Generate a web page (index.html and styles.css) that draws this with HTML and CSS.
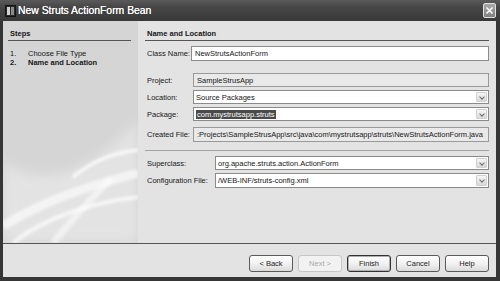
FILE: index.html
```html
<!DOCTYPE html>
<html lang="en">

<head>
  <meta charset="UTF-8" />
  <title>New Struts ActionForm Bean</title>
  <link rel="stylesheet" href="styles.css">
</head>

<body>
  <div class="window">
    <div class="titlebar">
      <svg class="app-icon" width="11" height="12" viewBox="0 0 11 12">
        <rect x="0.5" y="0.5" width="10" height="11" fill="#2a2a2a" stroke="#111" />
        <rect x="2" y="2" width="3" height="8" fill="#cfcfcf" />
        <rect x="6" y="2" width="3" height="8" fill="#8a8a8a" />
      </svg>
      <span class="title">New Struts ActionForm Bean</span>
      <span class="close">
        <svg width="9" height="9" viewBox="0 0 9 9">
          <path d="M1.5 1.5 L7.5 7.5 M7.5 1.5 L1.5 7.5" stroke="#fff" stroke-width="1.6" />
        </svg>
      </span>
    </div>

    <div class="body">
      <div class="main">
        <div class="steps">
          <svg class="swoosh" width="135" height="222" viewBox="0 0 135 222">
            <defs>
              <filter id="soft"><feGaussianBlur stdDeviation="1.5" /></filter>
              <filter id="softer"><feGaussianBlur stdDeviation="6" /></filter>
            </defs>
            <path d="M0 140 C 40 170, 90 150, 135 100 L135 222 L0 222 Z" fill="#fff" opacity="0.35" filter="url(#softer)" />
            <path d="M0 205 C 40 180, 85 165, 135 152" stroke="#fff" stroke-width="9" fill="none" opacity="0.6" filter="url(#soft)" />
            <path d="M10 222 C 40 198, 85 182, 135 176" stroke="#fff" stroke-width="4" fill="none" opacity="0.7" filter="url(#soft)" />
            <path d="M70 156 C 92 138, 114 131, 135 129" stroke="#fff" stroke-width="3" fill="none" opacity="0.9" filter="url(#soft)" />
            <path d="M50 222 C 68 200, 85 180, 108 158" stroke="#fff" stroke-width="7" fill="none" opacity="0.5" filter="url(#soft)" />
          </svg>
          <div class="heading">Steps</div>
          <ol class="step-list">
            <li><span class="num">1.</span>Choose File Type</li>
            <li class="current"><span class="num">2.</span>Name and Location</li>
          </ol>
        </div>

        <div class="content">
          <div class="heading">Name and Location</div>

          <div class="form form-top">
            <div class="row">
              <label>Class Name:</label>
              <div class="field">NewStrutsActionForm</div>
            </div>
          </div>

          <div class="form form-mid">
            <div class="row">
              <label>Project:</label>
              <div class="field readonly">SampleStrusApp</div>
            </div>
            <div class="row">
              <label>Location:</label>
              <div class="field combo"><span class="value">Source Packages</span><span class="arrow"></span></div>
            </div>
            <div class="row">
              <label>Package:</label>
              <div class="field combo"><span class="value"><span class="sel">com.mystrutsapp.struts</span></span><span class="arrow"></span></div>
            </div>
            <div class="row row-tall">
              <label>Created File:</label>
              <div class="field readonly">:Projects\SampleStrusApp\src\java\com\mystrutsapp\struts\NewStrutsActionForm.java</div>
            </div>
          </div>

          <div class="sep"></div>

          <div class="form form-bottom">
            <div class="row">
              <label>Superclass:</label>
              <div class="field combo"><span class="value">org.apache.struts.action.ActionForm</span><span class="arrow"></span></div>
            </div>
            <div class="row row-tall">
              <label>Configuration File:</label>
              <div class="field combo"><span class="value">/WEB-INF/struts-config.xml</span><span class="arrow"></span></div>
            </div>
          </div>
        </div>
      </div>

      <div class="footer">
        <button class="btn">&lt; Back</button>
        <button class="btn" disabled>Next &gt;</button>
        <button class="btn default">Finish</button>
        <button class="btn">Cancel</button>
        <button class="btn">Help</button>
      </div>
    </div>
  </div>
</body>

</html>
```

FILE: styles.css
```css
body {
  margin: 0;
  font-family: "Liberation Sans", Arial, sans-serif;
  font-size: 7.5px;
  color: #161616;
}

.window {
  width: 500px;
  height: 281px;
  background: #363636;
  display: flex;
  flex-direction: column;
}

/* title bar */
.titlebar {
  height: 21px;
  flex-shrink: 0;
  display: flex;
  align-items: center;
  padding: 0 4px 0 5px;
  background: linear-gradient(#5a5a5a, #464646 35%, #383838);
}

.app-icon {
  margin-top: 1px;
}

.title {
  flex: 1;
  margin-left: 2px;
  color: #fff;
  font-size: 10.4px;
  text-shadow: 0 0 0.4px #fff;
}

.close {
  width: 13px;
  height: 15px;
  box-sizing: border-box;
  border: 1px solid #e0e0e0;
  border-radius: 2px;
  background: linear-gradient(#a8a8a8, #808080);
  display: flex;
  align-items: center;
  justify-content: center;
}

/* dialog body */
.body {
  flex: 1;
  display: flex;
  flex-direction: column;
  margin: 0 4px 4px 3px;
  background: #e3e3e3;
}

.main {
  flex: 1;
  display: flex;
}

.heading {
  margin-top: 6px;
  height: 13px;
  line-height: 13px;
  padding-left: 2px;
  font-weight: bold;
  border-bottom: 1px solid #555;
}

.steps {
  width: 135px;
  flex-shrink: 0;
  box-sizing: border-box;
  padding: 0 7px 0 5px;
  background: #d5d5d5;
  position: relative;
  overflow: hidden;
}

.steps > * {
  position: relative;
}

.steps .swoosh {
  position: absolute;
  left: 0;
  top: 0;
}

.step-list {
  list-style: none;
  margin: 8px 0 0;
  padding: 0 0 0 2px;
  line-height: 9px;
}

.step-list .num {
  display: inline-block;
  width: 18px;
}

.step-list .current {
  font-weight: bold;
}

/* form */
.content {
  flex: 1;
  min-width: 0;
  padding: 0 7px;
}

.row {
  display: flex;
  height: 14px;
  margin-top: 3px;
}

.row-tall {
  height: 15px;
}

.row label {
  flex-shrink: 0;
  padding-left: 2px;
  box-sizing: border-box;
  display: flex;
  align-items: center;
  white-space: nowrap;
}

.form-top .row {
  height: 15px;
  margin-top: 5px;
}

.form-top label {
  width: 46px;
}

.form-mid {
  margin-top: 12px;
}

.form-mid label {
  width: 48px;
}

.form-mid .row-tall {
  margin-top: 6px;
}

.form-bottom label {
  width: 70px;
}

.field {
  flex: 1;
  min-width: 0;
  box-sizing: border-box;
  border: 1px solid #8a8a8a;
  background: #fff;
  display: flex;
  align-items: center;
  padding-left: 3px;
  white-space: nowrap;
  overflow: hidden;
}

.field.readonly {
  background: #e9e9e9;
  border-color: #999;
}

.field.combo {
  padding: 1px;
}

.combo .value {
  flex: 1;
  min-width: 0;
  padding-left: 1px;
  overflow: hidden;
}

.sel {
  background: #4a4a4a;
  color: #fff;
  padding: 0 1px;
}

.arrow {
  width: 11px;
  flex-shrink: 0;
  align-self: stretch;
  box-sizing: border-box;
  border: 1px solid #d0d0d0;
  border-radius: 1px;
  background: linear-gradient(#f6f6f6, #d9d9d9);
  position: relative;
}

.arrow::after {
  content: "";
  position: absolute;
  left: 2.5px;
  top: 2px;
  width: 3px;
  height: 3px;
  border-right: 1.5px solid #6a6a6a;
  border-bottom: 1.5px solid #6a6a6a;
  transform: rotate(45deg);
}

.sep {
  margin-top: 8px;
  border-top: 1px solid #a4a4a4;
}

.form-bottom {
  margin-top: 5px;
}

/* buttons */
.footer {
  height: 34px;
  box-sizing: border-box;
  border-top: 1px solid #555;
  display: flex;
  justify-content: flex-end;
  align-items: flex-start;
  gap: 5px;
  padding: 11px 7px 0 0;
}

.btn {
  width: 44px;
  height: 17px;
  box-sizing: border-box;
  border: 1px solid #5a5a5a;
  border-radius: 3px;
  background: linear-gradient(#ffffff, #f0f0f0 55%, #dadada);
  font: inherit;
  color: #222;
  padding: 0;
}

.btn.default {
  border-color: #333;
  box-shadow: inset 0 0 0 1px #b0b0b0;
}

.btn:disabled {
  border-color: #c6c6c6;
  background: #f2f2f2;
  color: #a8a8a8;
}
```
